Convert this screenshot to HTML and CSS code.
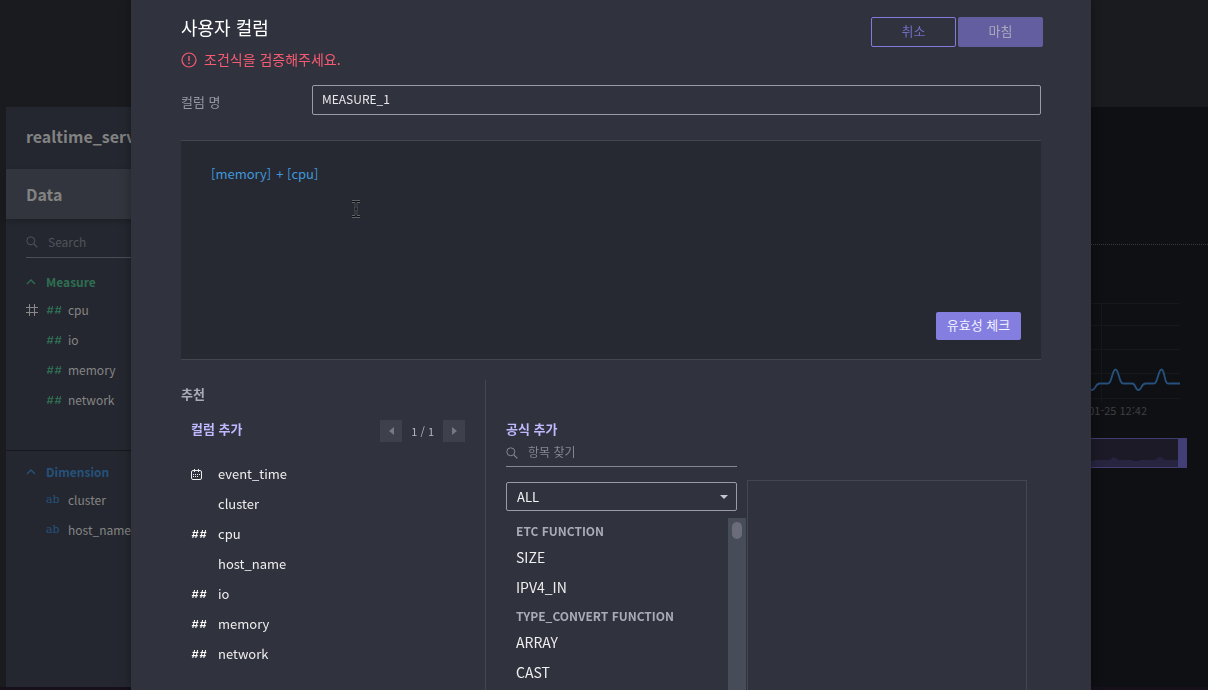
FILE: index.html
```html
<!DOCTYPE html>
<html lang="ko">
<head>
<meta charset="utf-8">
<meta name="viewport" content="width=device-width, initial-scale=1">
<title>사용자 컬럼</title>
<link rel="stylesheet" href="styles.css">
</head>
<body>
<svg class="sprite" aria-hidden="true">
  <symbol id="measure" viewBox="0 0 16 10"><path d="M3.6 1 1.8 9M6.6 1 4.8 9M1.4 3.5h6M.8 6.6h6M11.6 1 9.8 9M14.6 1 12.8 9M9.4 3.5h6M8.8 6.6h6" fill="none" stroke="currentColor" stroke-width="1.1"/></symbol>
  <symbol id="search" viewBox="0 0 12 12"><circle cx="4.8" cy="4.8" r="4" fill="none" stroke="currentColor"/><path d="m7.8 7.8 3.5 3.5" stroke="currentColor" stroke-width="1.2"/></symbol>
  <symbol id="chevron" viewBox="0 0 10 6"><path d="m1 5 4-4 4 4" fill="none" stroke="currentColor" stroke-width="1.4"/></symbol>
</svg>

<div class="page">
  <div class="topbar"></div>
  <div class="workspace">
    <aside class="sidebar">
      <h1 class="source-name">realtime_server</h1>
      <h2 class="data-head">Data</h2>
      <label class="side-search">
        <svg class="icon-search"><use href="#search"/></svg>
        <input type="text" placeholder="Search" aria-label="Search">
      </label>
      <section class="group measure">
        <h3><svg class="icon-chevron"><use href="#chevron"/></svg>Measure</h3>
        <ul>
          <li><svg class="icon-grid" viewBox="0 0 12 12"><path d="M3.5 0v12M8.5 0v12M0 3.5h12M0 8.5h12" stroke="currentColor"/></svg><svg class="icon-measure"><use href="#measure"/></svg>cpu</li>
          <li><svg class="icon-measure"><use href="#measure"/></svg>io</li>
          <li><svg class="icon-measure"><use href="#measure"/></svg>memory</li>
          <li><svg class="icon-measure"><use href="#measure"/></svg>network</li>
        </ul>
      </section>
      <section class="group dimension">
        <h3><svg class="icon-chevron"><use href="#chevron"/></svg>Dimension</h3>
        <ul>
          <li><span class="icon-ab">ab</span>cluster</li>
          <li><span class="icon-ab">ab</span>host_name</li>
        </ul>
      </section>
    </aside>
    <main class="content">
      <div class="content-head"></div>
      <svg class="chart" viewBox="0 0 200 100">
        <path d="M0 .5h200M0 22.5h200M0 46.5h200M0 70.5h200M0 95.5h200M121.500 0v100" stroke="#17181b" fill="none"/>
        <path d="M100 80.500C108 80 108 87 112 87S115 80 120 80.500H127C132 82 132 66.500 135.500 66.500S139 82 144 80.500H152C156 80 155 87 158.500 87S161 80 166 80.500H173C178 82 178 66.500 181.500 66.500S184 82 189 80.500H200" fill="none" stroke="#27517d" stroke-width="1.800"/>
      </svg>
      <div class="chart-label">01-25 12:42</div>
      <div class="range">
        <svg viewBox="0 0 200 10"><path d="M0 3H106Q112 5 117 3H131L136 0 141 3H153Q158 5 163 3H177L182 0 187 3H200V10H0Z" fill="#272440"/></svg>
        <span class="range-handle"></span>
      </div>
    </main>
  </div>
</div>

<div class="overlay">
  <form class="modal" role="dialog" aria-labelledby="dialog-title">
    <header class="modal-head">
      <div>
        <h2 id="dialog-title" class="modal-title">사용자 컬럼</h2>
        <p class="warning">
          <svg viewBox="0 0 16 16"><circle cx="8" cy="8" r="7" fill="none" stroke="currentColor" stroke-width="1.200"/><path d="M8 4v5M8 10.500v1.500" stroke="currentColor" stroke-width="1.400"/></svg>
          <span>조건식을 검증해주세요.</span>
        </p>
      </div>
      <div class="actions">
        <button type="button" class="btn cancel">취소</button>
        <button type="submit" class="btn done">마침</button>
      </div>
    </header>

    <div class="name-row">
      <label for="column-name">컬럼 명</label>
      <input id="column-name" type="text" value="MEASURE_1">
    </div>

    <div class="editor">
      <div class="formula"><span>[memory]</span><span>+ [cpu]</span></div>
      <svg class="cursor" viewBox="0 0 10 18"><path d="M1 1.500h3l1 1 1-1h3M5 2v14M1 16.500h3l1-1 1 1h3M3 9h4" fill="none" stroke="#77787c" stroke-width="2.400"/><path d="M1 1.500h3l1 1 1-1h3M5 2v14M1 16.500h3l1-1 1 1h3M3 9h4" fill="none" stroke="#0c0d10" stroke-width="1.200"/></svg>
      <button type="button" class="btn validate">유효성 체크</button>
    </div>

    <div class="suggest">
      <section class="columns">
        <h3 class="suggest-title">추천</h3>
        <div class="columns-head">
          <h4 class="sub-title">컬럼 추가</h4>
          <div class="pager">
            <button type="button" aria-label="이전"><svg viewBox="0 0 5 8"><path d="M5 0v8L0 4z" fill="currentColor"/></svg></button>
            <span>1 / 1</span>
            <button type="button" aria-label="다음"><svg viewBox="0 0 5 8"><path d="M0 0v8l5-4z" fill="currentColor"/></svg></button>
          </div>
        </div>
        <ul class="column-list">
          <li><i><svg class="icon-calendar" viewBox="0 0 11 11"><path d="M2 1.500h7q1.500 0 1.500 1.500v6q0 1.500-1.500 1.500H2Q.5 10.500.5 9V3Q.5 1.500 2 1.500M3.500 0v3M7.500 0v3" fill="none" stroke="currentColor"/><path d="M2 5.500h7M2 7.500h5" stroke="currentColor" stroke-dasharray="1 1"/></svg></i>event_time</li>
          <li><i></i>cluster</li>
          <li><i><svg class="icon-measure"><use href="#measure"/></svg></i>cpu</li>
          <li><i></i>host_name</li>
          <li><i><svg class="icon-measure"><use href="#measure"/></svg></i>io</li>
          <li><i><svg class="icon-measure"><use href="#measure"/></svg></i>memory</li>
          <li><i><svg class="icon-measure"><use href="#measure"/></svg></i>network</li>
        </ul>
      </section>

      <section class="functions">
        <h4 class="sub-title">공식 추가</h4>
        <label class="func-search">
          <svg class="icon-search"><use href="#search"/></svg>
          <input type="text" placeholder="항목 찾기" aria-label="항목 찾기">
        </label>
        <div class="select">
          <select aria-label="공식 유형"><option>ALL</option></select>
          <svg viewBox="0 0 8 4"><path d="M0 0h8L4 4z" fill="currentColor"/></svg>
        </div>
        <div class="func-scroll">
          <div class="func-list">
            <h5>ETC FUNCTION</h5>
            <ul><li>SIZE</li><li>IPV4_IN</li></ul>
            <h5>TYPE_CONVERT FUNCTION</h5>
            <ul><li>ARRAY</li><li>CAST</li></ul>
          </div>
          <div class="scrollbar"><div class="thumb"></div></div>
        </div>
      </section>
      <section class="detail"></section>
    </div>
  </form>
</div>
</body>
</html>
```
FILE: styles.css
```css
* { box-sizing: border-box; }
body, h1, h2, h3, h4, h5, p, ul { margin: 0; padding: 0; }
ul { list-style: none; }
body {
  background: #1a1b1f;
  font: 13px/20px "Noto Sans CJK KR", "Noto Sans", sans-serif;
  overflow: hidden;
}
svg { display: block; flex: none; }
input, button, select { font: inherit; color: inherit; border: 0; background: none; padding: 0; outline: 0; }
button { cursor: pointer; }
.sprite { position: absolute; width: 0; height: 0; }
.icon-search { width: 12px; height: 12px; }
.icon-chevron { width: 10px; height: 6px; }
.icon-measure { width: 16px; height: 10px; }
.icon-calendar { width: 11px; height: 11px; }

/* Dashboard behind the dialog */
.page { display: flex; flex-direction: column; min-height: 100vh; border-bottom: 3px solid #15101a; }
.topbar { height: 107px; background: #1a1b1f; }
.workspace { display: flex; flex: 1; padding-left: 6px; }
.sidebar { width: 260px; background: #24272f; color: #858585; font-size: 12px; }
.source-name, .data-head { padding-left: 20px; font-size: 16px; font-weight: 700; color: #828282; }
.source-name { line-height: 58px; padding-bottom: 4px; }
.data-head { line-height: 50px; background: #32353d; box-shadow: 0 2px 6px rgba(0, 0, 0, .2); }
.side-search { display: flex; align-items: center; gap: 10px; margin: 8px 20px 0; height: 31px; border-bottom: 1px solid #4b4e57; color: #51545c; }
.side-search input { width: 100%; }
.side-search input::placeholder { color: #51545c; opacity: 1; }
.group h3 { display: flex; align-items: center; gap: 10px; font-size: 12px; line-height: 26px; padding-left: 20px; }
.group li { display: flex; align-items: center; gap: 6px; line-height: 30px; padding-left: 40px; }
.measure { padding: 11px 0 35px; border-bottom: 1px solid #17191e; }
.measure h3, .icon-measure { color: #2f6d52; }
.icon-grid { width: 12px; height: 12px; margin-left: -20px; margin-right: 2px; color: #8a8a8a; }
.dimension { padding-top: 8px; }
.dimension h3, .icon-ab { color: #24527c; }
.icon-ab { width: 16px; font: 11px/26px "DejaVu Serif", serif; }
.content { flex: 1; background: #0f1013; }
.content-head { height: 138px; border-bottom: 1px dotted #38393d; }
.chart { width: 200px; height: 100px; margin: 58px 28px 0 auto; }
.chart-label { padding-right: 61px; text-align: right; font-size: 11px; line-height: 14px; color: #3e3f43; }
.range { display: flex; align-items: flex-end; justify-content: flex-end; height: 30px; margin: 21px 21px 0 0; border: solid #403e70; border-width: 1px 0; background: #1c1a26; }
.range svg { width: 200px; height: 10px; }
.range-handle { width: 9px; align-self: stretch; background: #423f76; }

/* Dialog */
.overlay { position: fixed; inset: 0; display: flex; padding: 0 117px 0 131px; }
.modal { flex: 1; min-width: 0; display: flex; flex-direction: column; padding: 0 50px; background: #30323d; color: #eee; box-shadow: 0 0 10px rgba(0, 0, 0, .35); overflow: hidden; }
.modal-head { display: flex; justify-content: space-between; padding-top: 14px; margin-right: -2px; }
.modal-title { font-size: 18px; font-weight: 400; line-height: 26px; color: #fff; }
.warning { display: flex; align-items: center; gap: 7px; margin-top: 9px; font-size: 14px; color: #f75b72; }
.warning span { padding-bottom: 2px; }
.warning svg { width: 16px; height: 16px; }
.actions { display: flex; align-items: flex-start; gap: 2px; padding-top: 3px; }
.btn { height: 30px; width: 85px; padding-bottom: 2px; border-radius: 2px; }
.cancel { border: 1px solid #807cdd; color: #716ec4; }
.done { background: #625e9f; color: #aaa8bd; }
.name-row { display: flex; align-items: center; margin-top: 14px; color: #9698a5; }
.name-row label { width: 131px; padding-top: 4px; }
.name-row input { flex: 1; height: 30px; padding: 0 9px 4px; border: 1px solid #9a9ba9; border-radius: 2px; font-size: 12px; color: #e8e8ec; }
.editor { position: relative; display: flex; flex-direction: column; justify-content: space-between; height: 220px; margin-top: 25px; padding: 23px 20px 19px 30px; background: #262931; border: solid #43454f; border-width: 1px 0; }
.formula { display: flex; gap: 5px; color: #4197dc; }
.cursor { position: absolute; left: 170px; top: 59px; width: 10px; height: 18px; }
.validate { align-self: flex-end; height: 28px; background: #837edf; color: #f1f0ff; }
.suggest { display: flex; flex: 1; min-height: 0; margin-top: 20px; }
.columns { width: 305px; padding: 4px 20px 0 0; border-right: 1px solid #444650; }
.suggest-title { font-size: 13px; color: #a9abb8; }
.columns-head { display: flex; justify-content: space-between; align-items: flex-start; padding: 15px 0 0 10px; }
.sub-title { font-size: 13px; color: #bfb9ff; }
.pager { display: flex; align-items: center; gap: 9px; padding-top: 1px; font-size: 11px; color: #b5b6bf; }
.pager button { display: grid; place-items: center; width: 22px; height: 22px; background: #3e414b; color: #777983; }
.pager svg { width: 5px; height: 8px; }
.column-list { padding: 17px 0 0 10px; font-size: 13px; }
.column-list li { display: flex; align-items: center; line-height: 30px; }
.column-list i { width: 27px; flex: none; }
.column-list .icon-measure { color: #fff; }
.functions { width: 261px; padding: 39px 0 0 20px; display: flex; flex-direction: column; }
.func-search { display: flex; align-items: center; gap: 10px; height: 28px; margin-right: 10px; border-bottom: 1px solid #858794; color: #858794; font-size: 12px; }
.func-search input { width: 100%; height: 20px; margin-bottom: 2px; }
.func-search input::placeholder { color: #858794; opacity: 1; }
.select { position: relative; margin: 15px 10px 0 0; }
.select select { display: block; width: 100%; height: 29px; padding-left: 10px; border: 1px solid #9a9ba9; border-radius: 2px; appearance: none; color: #f4f4f4; }
.select svg { position: absolute; right: 9px; top: 13px; width: 8px; height: 4px; color: #c5c6ce; pointer-events: none; }
.func-scroll { display: flex; flex: 1; min-height: 0; margin-top: 7px; }
.func-list { flex: 1; padding-left: 10px; overflow: hidden; }
.func-list h5 { font-size: 12px; line-height: 25px; color: #a9abb8; }
.func-list ul { margin-top: -1px; padding-bottom: 1px; }
.func-list li { font-size: 14px; line-height: 30px; }
.scrollbar { width: 18px; margin-right: 1px; padding: 4px; background: #474c59; }
.thumb { width: 10px; height: 17px; border-radius: 5px; background: #6a6d79; }
.detail { flex: 1; margin: 100px 14px 0 0; border: 1px solid #444650; border-bottom: 0; }
```
